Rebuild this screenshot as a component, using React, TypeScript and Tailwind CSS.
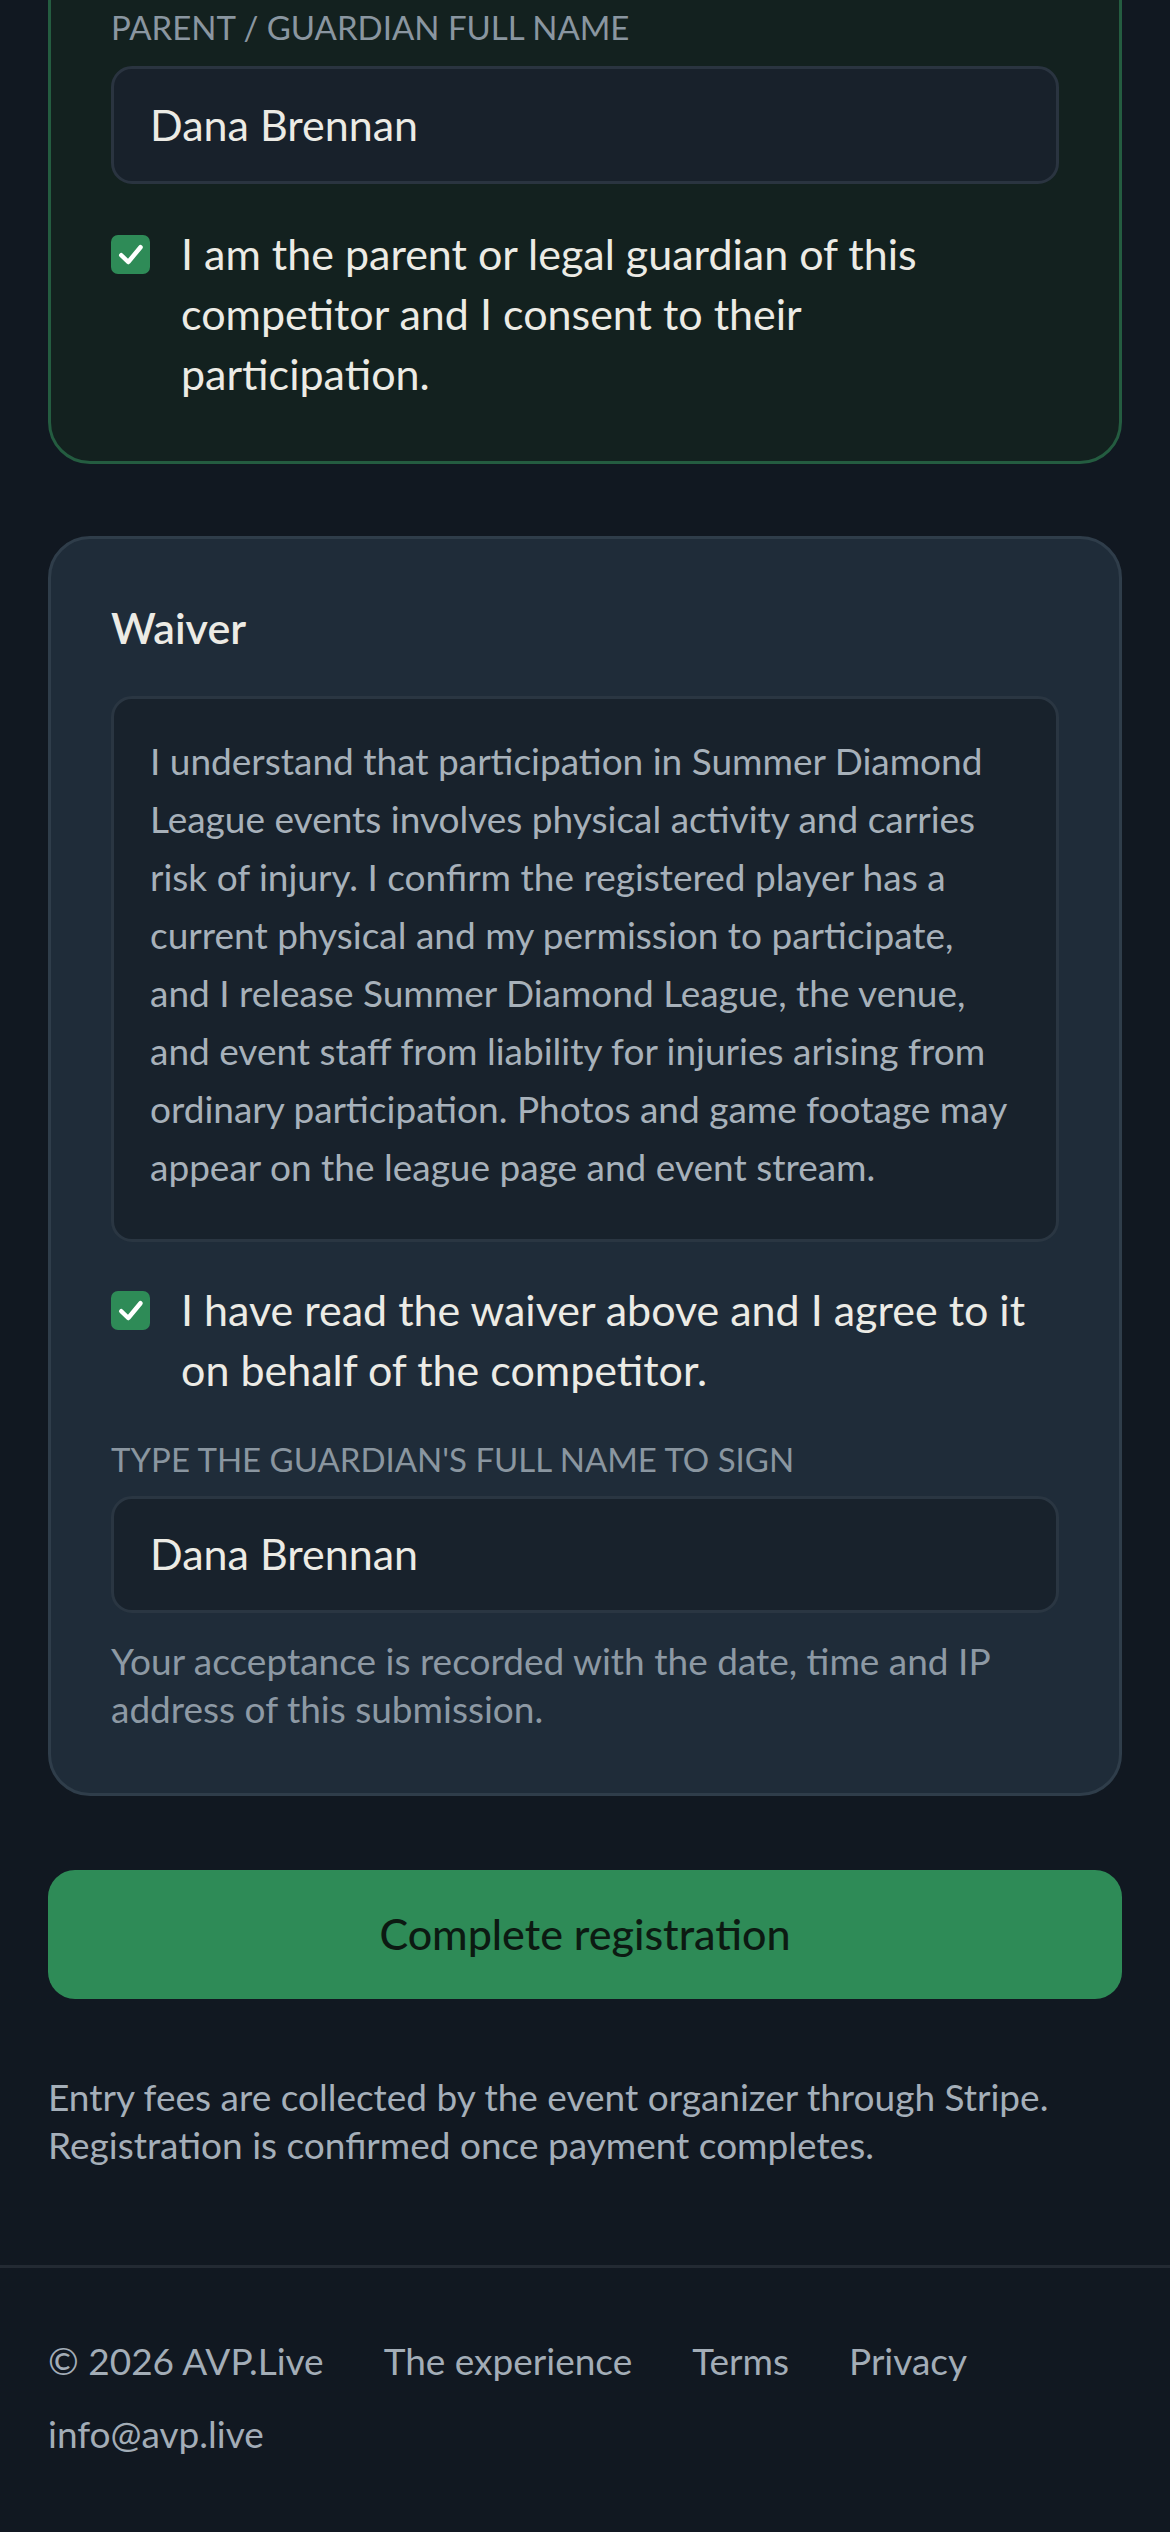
import React from "react";

const FONT = { fontFamily: "Lato, 'Noto Sans', sans-serif" };

function Check() {
  return (
    <span className="mt-[11px] flex h-[39px] w-[39px] shrink-0 items-center justify-center rounded-[7px] bg-[#2e8b57]">
      <svg viewBox="0 0 24 24" className="h-[30px] w-[30px]" fill="none">
        <path d="M4.2 12.2 L9.8 17.6 L19.6 5.8" stroke="#ffffff" strokeWidth="3.6" strokeLinecap="round" strokeLinejoin="round" />
      </svg>
    </span>
  );
}

export default function App() {
  return (
    <div className="flex min-h-screen w-full flex-col bg-[#111821]" style={FONT}>
      <div className="flex flex-col px-[48px]">
        {/* Guardian card */}
        <div className="-mt-[60px] rounded-[42px] border-[3px] border-[#245c40] bg-[#13211f] px-[60px] pb-[57px] pt-[60px]">
          <div className="text-[33px] uppercase leading-[48px] text-[#8a96a0]">Parent / Guardian full name</div>
          <div className="mt-[15px] flex h-[118px] items-center rounded-[21px] border-[3px] border-[#2a3440] bg-[#18212b] px-[36px] text-[43px] text-[#ecebe5]">
            Dana Brennan
          </div>
          <div className="mt-[40px] flex gap-[31px]">
            <Check />
            <div className="text-[43px] leading-[60px] text-[#ecebe5]">
              I am the parent or legal guardian of this
              <br />
              competitor and I consent to their
              <br />
              participation.
            </div>
          </div>
        </div>

        {/* Waiver card */}
        <div className="mt-[72px] rounded-[42px] border-[3px] border-[#2f3d4a] bg-[#1f2c39] p-[60px]">
          <div className="text-[43px] font-semibold leading-[58px] text-[#ecebe5]">Waiver</div>
          <div className="mt-[39px] rounded-[21px] border-[3px] border-[#2a3642] bg-[#18222c] px-[36px] pb-[43px] pt-[33px] text-[37px] leading-[58px] text-[#a7b1ba]">
            I understand that participation in Summer Diamond
            <br />
            League events involves physical activity and carries
            <br />
            risk of injury. I confirm the registered player has a
            <br />
            current physical and my permission to participate,
            <br />
            and I release Summer Diamond League, the venue,
            <br />
            and event staff from liability for injuries arising from
            <br />
            ordinary participation. Photos and game footage may
            <br />
            appear on the league page and event stream.
          </div>
          <div className="mt-[38px] flex gap-[31px]">
            <Check />
            <div className="text-[43px] leading-[60px] text-[#ecebe5]">
              I have read the waiver above and I agree to it
              <br />
              on behalf of the competitor.
            </div>
          </div>
          <div className="mt-[35px] text-[33px] uppercase leading-[48px] text-[#8a96a0]">Type the guardian's full name to sign</div>
          <div className="mt-[13px] flex h-[117px] items-center rounded-[21px] border-[3px] border-[#2a3642] bg-[#18222c] px-[36px] text-[43px] text-[#ecebe5]">
            Dana Brennan
          </div>
          <div className="mt-[24px] text-[37px] leading-[48px] text-[#8d99a4]">
            Your acceptance is recorded with the date, time and IP
            <br />
            address of this submission.
          </div>
        </div>

        <button className="mt-[74px] flex h-[129px] w-full items-center justify-center rounded-[27px] bg-[#2e8b57] text-[43px] font-medium text-[#0c1a12]">
          Complete registration
        </button>

        <div className="mt-[74px] text-[37px] leading-[48px] text-[#a5afb9]">
          Entry fees are collected by the event organizer through Stripe.
          <br />
          Registration is confirmed once payment completes.
        </div>
      </div>

      <div className="mt-[96px] border-t-[3px] border-[#232a33] px-[48px] pb-[80px] pt-[67px]">
        <div className="flex flex-wrap gap-x-[60px] gap-y-[21px] text-[37px] leading-[52px] text-[#a3adb7]">
          <span>© 2026 AVP.Live</span>
          <span>The experience</span>
          <span>Terms</span>
          <span>Privacy</span>
          <span>info@avp.live</span>
        </div>
      </div>
    </div>
  );
}
